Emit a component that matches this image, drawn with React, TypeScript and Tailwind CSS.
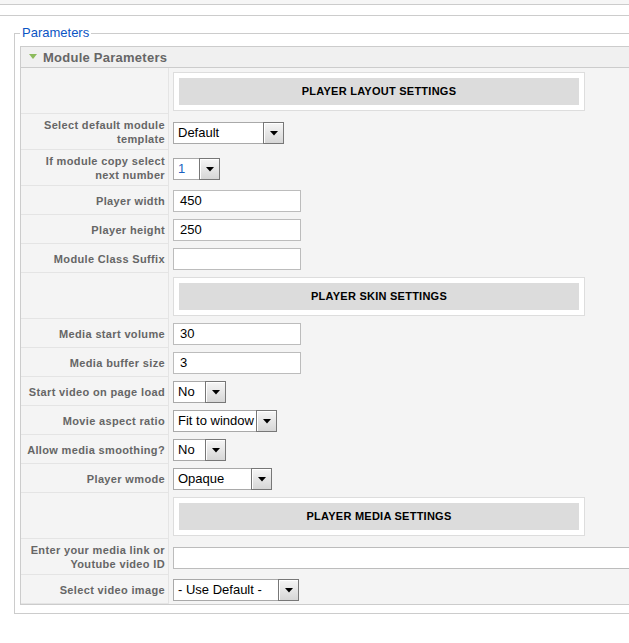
import type { ReactNode } from 'react';

type RowProps = {
  label: string;
  tall?: boolean;
  children: ReactNode;
};

function Row({ label, tall, children }: RowProps) {
  return (
    <div className="flex">
      <div
        className={`w-[148px] shrink-0 border-b border-r border-[#e4e4e4] pl-[4px] pr-[3px] flex items-center justify-end text-right text-[11px] leading-[14px] font-bold tracking-[0.35px] text-[#666666] ${
          tall ? 'h-[36px]' : 'h-[29px]'
        }`}
      >
        <span className="pt-px">{label}</span>
      </div>
      <div className={`flex-1 pl-[4px] ${tall ? 'pt-[8px]' : 'pt-[4px]'}`}>{children}</div>
    </div>
  );
}

function SectionRow({ title }: { title: string }) {
  return (
    <div className="flex">
      <div className="w-[148px] h-[46px] shrink-0 border-b border-r border-[#e4e4e4]" />
      <div className="flex-1 pl-[4px] pt-[4px]">
        <div className="w-[412px] border border-[#dddddd] bg-white p-[5px]">
          <div className="h-[27px] bg-[#dcdcdc] flex items-center justify-center text-[11px] font-bold tracking-[0.25px] text-black uppercase">
            {title}
          </div>
        </div>
      </div>
    </div>
  );
}

function TextInput({ value, className }: { value: string; className: string }) {
  return (
    <div
      className={`h-[22px] border border-[#bcbcbc] bg-white pl-[6px] pt-[2px] text-[13px] leading-[16px] text-black ${className}`}
    >
      {value}
    </div>
  );
}

function Select({ value, className, blue }: { value: string; className: string; blue?: boolean }) {
  return (
    <div className={`flex h-[22px] ${className}`}>
      <div
        className={`flex-1 border-y border-l border-[#a9a9a9] bg-white pl-[4px] pt-[2px] text-[13px] leading-[16px] ${
          blue ? 'text-[#1a5fc0]' : 'text-black'
        }`}
      >
        {value}
      </div>
      <div className="w-[21px] border border-[#777777] bg-gradient-to-b from-[#f6f6f6] to-[#d6d6d6] flex items-center justify-center shadow-[inset_1px_1px_0_#ffffff]">
        <svg width="8" height="5" viewBox="0 0 8 5">
          <polygon points="0,0 8,0 4,4.5" fill="#000000" />
        </svg>
      </div>
    </div>
  );
}

export default function App() {
  return (
    <div className="w-[629px] h-[643px] overflow-hidden bg-white font-['Liberation_Sans',Arial,sans-serif]">
      <div className="h-[4px] bg-[#f6f6f6]" />
      <div className="h-[11px] border-t border-[#cccccc] bg-white" />
      <div className="border-t border-[#cccccc]" />

      <fieldset className="ml-[14px] mt-[9px] w-[680px] border border-[#cccccc] px-[5px] pb-[8px]">
        <legend className="px-[2px] text-[13px] leading-[16px] text-[#0b55c4]">Parameters</legend>

        <div className="mt-[5px] border border-[#cccccc] bg-[#f4f4f4]">
          <div className="h-[21px] border-b border-[#cccccc] bg-[#f0f0f0] flex items-center pl-[8px]">
            <svg width="8" height="6" viewBox="0 0 8 6">
              <polygon points="0,0 8,0 4,5" fill="#8cbb5c" />
            </svg>
            <span className="ml-[6px] pt-px text-[13px] leading-[16px] font-bold tracking-[0.25px] text-[#666666]">
              Module Parameters
            </span>
          </div>

          <SectionRow title="Player Layout Settings" />
          <Row label="Select default module template" tall>
            <Select value="Default" className="w-[111px]" />
          </Row>
          <Row label="If module copy select next number" tall>
            <Select value="1" className="w-[47px]" blue />
          </Row>
          <Row label="Player width">
            <TextInput value="450" className="w-[128px]" />
          </Row>
          <Row label="Player height">
            <TextInput value="250" className="w-[128px]" />
          </Row>
          <Row label="Module Class Suffix">
            <TextInput value="" className="w-[128px]" />
          </Row>

          <SectionRow title="Player Skin Settings" />
          <Row label="Media start volume">
            <TextInput value="30" className="w-[128px]" />
          </Row>
          <Row label="Media buffer size">
            <TextInput value="3" className="w-[128px]" />
          </Row>
          <Row label="Start video on page load">
            <Select value="No" className="w-[53px]" />
          </Row>
          <Row label="Movie aspect ratio">
            <Select value="Fit to window" className="w-[104px]" />
          </Row>
          <Row label="Allow media smoothing?">
            <Select value="No" className="w-[53px]" />
          </Row>
          <Row label="Player wmode">
            <Select value="Opaque" className="w-[99px]" />
          </Row>

          <SectionRow title="Player Media Settings" />
          <Row label="Enter your media link or Youtube video ID" tall>
            <TextInput value="" className="w-[520px]" />
          </Row>
          <Row label="Select video image">
            <Select value="- Use Default -" className="w-[126px]" />
          </Row>
        </div>
      </fieldset>
    </div>
  );
}
